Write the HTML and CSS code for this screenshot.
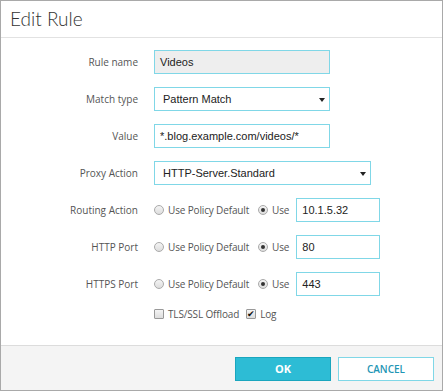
FILE: index.html
```html
<!DOCTYPE html>
<html lang="en">
<head>
    <meta charset="UTF-8">
    <title>Edit Rule</title>
    <link rel="stylesheet" href="styles.css">
</head>
<body>

<div class="dialog">
    <div class="dialog-header">
        <h1>Edit Rule</h1>
    </div>

    <div class="dialog-body">
        <div class="form">
            <label class="label">Rule name</label>
            <div class="field"><div class="input w-mid readonly">Videos</div></div>

            <label class="label">Match type</label>
            <div class="field"><div class="select w-mid">Pattern Match<span class="arrow"></span></div></div>

            <label class="label">Value</label>
            <div class="field"><div class="input w-mid">*.blog.example.com/videos/*</div></div>

            <label class="label">Proxy Action</label>
            <div class="field"><div class="select w-wide">HTTP-Server.Standard<span class="arrow"></span></div></div>

            <label class="label">Routing Action</label>
            <div class="field">
                <span class="option"><span class="radio"></span>Use Policy Default</span>
                <span class="option option-use"><span class="radio checked"></span>Use</span>
                <div class="input w-small">10.1.5.32</div>
            </div>

            <label class="label">HTTP Port</label>
            <div class="field">
                <span class="option"><span class="radio"></span>Use Policy Default</span>
                <span class="option option-use"><span class="radio checked"></span>Use</span>
                <div class="input w-small">80</div>
            </div>

            <label class="label">HTTPS Port</label>
            <div class="field">
                <span class="option"><span class="radio"></span>Use Policy Default</span>
                <span class="option option-use"><span class="radio checked"></span>Use</span>
                <div class="input w-small">443</div>
            </div>

            <span></span>
            <div class="field checks">
                <span class="option"><span class="checkbox"></span>TLS/SSL Offload</span>
                <span class="option"><span class="checkbox checked">&#10004;</span>Log</span>
            </div>
        </div>
    </div>

    <div class="dialog-footer">
        <button class="btn btn-primary">OK</button>
        <button class="btn btn-secondary">CANCEL</button>
    </div>
</div>

</body>
</html>
```

FILE: styles.css
```css
* {
    box-sizing: border-box;
}
body {
    margin: 0;
    background-color: #fff;
    font-family: 'Open Sans', sans-serif;
}
.dialog {
    width: 443px;
    height: 391px;
    border: 1px solid #a9a9a9;
    display: flex;
    flex-direction: column;
}
.dialog-header {
    height: 37px;
    border-bottom: 1px solid #e2e2e2;
    padding-left: 9px;
}
.dialog-header h1 {
    margin: 0;
    font-family: 'Lato', sans-serif;
    font-weight: 300;
    font-size: 19px;
    line-height: 36px;
    color: #333;
}
.dialog-body {
    flex: 1;
    padding-top: 12px;
}
.form {
    display: grid;
    grid-template-columns: 137px auto;
    column-gap: 16px;
    row-gap: 13px;
    align-items: center;
}
.label {
    text-align: right;
    font-size: 10px;
    color: #555;
}
.field {
    display: flex;
    align-items: center;
    height: 24px;
}
.input,
.select {
    height: 24px;
    border: 1px solid #80d7e7;
    font-family: 'Liberation Sans', Arial, sans-serif;
    font-size: 11px;
    color: #222;
    line-height: 22px;
    padding: 0 5px;
    white-space: nowrap;
}
.readonly {
    background-color: #eee;
}
.select {
    position: relative;
    padding-left: 8px;
}
.arrow {
    position: absolute;
    right: 4px;
    top: 10px;
    border-left: 3px solid transparent;
    border-right: 3px solid transparent;
    border-top: 4px solid #222;
}
.w-mid {
    width: 176px;
}
.w-wide {
    width: 217px;
}
.w-small {
    width: 84px;
}
.option {
    display: flex;
    align-items: center;
    font-size: 10px;
    letter-spacing: -0.15px;
    color: #555;
    white-space: nowrap;
}
.option-use {
    margin-left: 9px;
    margin-right: 7px;
}
.radio {
    width: 10px;
    height: 10px;
    border: 1px solid #aaa;
    border-radius: 50%;
    background: linear-gradient(#f4f4f4, #ddd);
    margin-right: 4px;
    position: relative;
}
.radio.checked::after {
    content: '';
    position: absolute;
    left: 2px;
    top: 2px;
    width: 4px;
    height: 4px;
    border-radius: 50%;
    background-color: #333;
}
.checks {
    height: 10px;
    gap: 7px;
}
.checkbox {
    width: 10px;
    height: 10px;
    border: 1px solid #999;
    border-radius: 1px;
    background: linear-gradient(#f4f4f4, #ddd);
    margin-right: 4px;
    font-size: 9px;
    line-height: 8px;
    text-align: center;
    color: #111;
}
.dialog-footer {
    height: 45px;
    border-top: 1px solid #dcdcdc;
    background-color: #f4f4f4;
    display: flex;
    justify-content: flex-end;
    align-items: center;
    gap: 7px;
    padding-right: 8px;
    padding-top: 1px;
}
.btn {
    width: 96px;
    height: 24px;
    font-family: 'Open Sans', sans-serif;
    font-size: 10px;
    cursor: pointer;
}
.btn-primary {
    background-color: #2dbcd5;
    border: 1px solid #1aa6be;
    color: #fff;
    font-weight: bold;
    font-size: 11px;
}
.btn-secondary {
    background-color: #fff;
    border: 1px solid #80d7e7;
    color: #1f96b5;
    font-weight: 600;
}
```
